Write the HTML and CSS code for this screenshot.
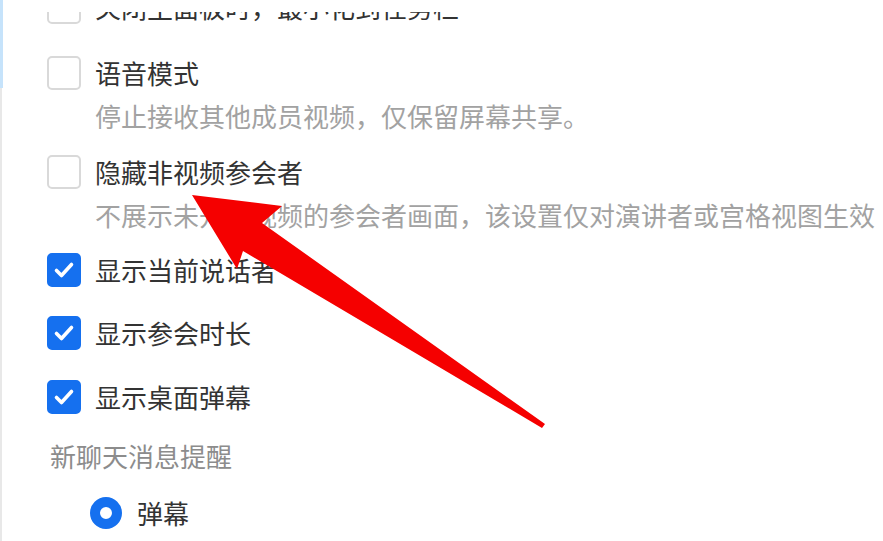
FILE: index.html
```html
<!DOCTYPE html>
<html lang="zh-CN">
<head>
<meta charset="utf-8">
<title>设置</title>
<link rel="stylesheet" href="styles.css">
</head>
<body>
<div class="frame">
  <div class="viewport">
    <div class="list">
      <div class="item first"><span class="box"></span><span>关闭主面板时，最小化到任务栏</span></div>
      <div class="item gap-a"><span class="box"></span><span>语音模式</span></div>
      <div class="desc">停止接收其他成员视频，仅保留屏幕共享。</div>
      <div class="item gap-b"><span class="box"></span><span>隐藏非视频参会者</span></div>
      <div class="desc">不展示未开启视频的参会者画面，该设置仅对演讲者或宫格视图生效</div>
      <div class="item gap-c"><span class="box on"><svg viewBox="0 0 34 34" width="34" height="34"><path d="M9.5 17.5 L14.5 22.5 L24.5 11.5" fill="none" stroke="#fff" stroke-width="3.6" stroke-linecap="round" stroke-linejoin="round"/></svg></span><span>显示当前说话者</span></div>
      <div class="item gap-d"><span class="box on"><svg viewBox="0 0 34 34" width="34" height="34"><path d="M9.5 17.5 L14.5 22.5 L24.5 11.5" fill="none" stroke="#fff" stroke-width="3.6" stroke-linecap="round" stroke-linejoin="round"/></svg></span><span>显示参会时长</span></div>
      <div class="item gap-e"><span class="box on"><svg viewBox="0 0 34 34" width="34" height="34"><path d="M9.5 17.5 L14.5 22.5 L24.5 11.5" fill="none" stroke="#fff" stroke-width="3.6" stroke-linecap="round" stroke-linejoin="round"/></svg></span><span>显示桌面弹幕</span></div>
      <div class="section">新聊天消息提醒</div>
      <div class="radio-row"><span class="radio"></span><span>弹幕</span></div>
    </div>
  </div>
  <svg class="arrow" viewBox="0 0 883 541" width="883" height="541">
    <polygon points="192,195 282,206 262,223 545,424 542,428 243,251 237,269" fill="#f50000"/>
  </svg>
</div>
</body>
</html>
```

FILE: styles.css
```css
html, body {
  margin: 0;
  padding: 0;
  background: #ffffff;
}

body {
  width: 883px;
  height: 541px;
  overflow: hidden;
  font-family: "Noto Sans CJK SC", "Noto Sans", sans-serif;
}

.frame {
  position: relative;
  height: 541px;
  box-sizing: border-box;
  padding-top: 12px;
  border-left: 2px solid #e8e8e8;
}

.frame::before {
  content: "";
  position: absolute;
  left: -2px;
  top: 0;
  width: 3px;
  height: 88px;
  background: #c6e3fb;
}

.viewport {
  height: 529px;
  overflow: hidden;
}

.list {
  display: flex;
  flex-direction: column;
  margin-top: -22px;
  padding-left: 45px;
}

.item {
  display: flex;
  align-items: center;
  gap: 14px;
  height: 34px;
  line-height: 34px;
  font-size: 26px;
  color: #333333;
  white-space: nowrap;
}

.gap-a { margin-top: 32px; }
.gap-b { margin-top: 22px; }
.gap-c { margin-top: 21px; }
.gap-d { margin-top: 29px; }
.gap-e { margin-top: 30px; }

.box {
  flex: none;
  width: 34px;
  height: 34px;
  box-sizing: border-box;
  border: 2px solid #d9d9d9;
  border-radius: 5px;
  background: #ffffff;
  display: flex;
  align-items: center;
  justify-content: center;
}

.box.on {
  background: #1570ef;
  border-color: #1570ef;
}

.box.on svg {
  display: block;
  flex: none;
}

.desc {
  margin-top: 9px;
  padding-left: 48px;
  height: 34px;
  line-height: 34px;
  font-size: 26px;
  color: #a2a2a2;
  white-space: nowrap;
}

.section {
  margin-top: 25px;
  padding-left: 3px;
  height: 34px;
  line-height: 34px;
  font-size: 26px;
  color: #8c8c8c;
  white-space: nowrap;
}

.radio-row {
  margin-top: 23px;
  padding-left: 43px;
  display: flex;
  align-items: center;
  gap: 15px;
  height: 34px;
  line-height: 34px;
  font-size: 26px;
  color: #333333;
}

.radio {
  flex: none;
  width: 32px;
  height: 32px;
  box-sizing: border-box;
  border-radius: 50%;
  border: 10px solid #1570ef;
  background: #ffffff;
}

.arrow {
  position: absolute;
  left: -2px;
  top: 0;
  pointer-events: none;
}
```
